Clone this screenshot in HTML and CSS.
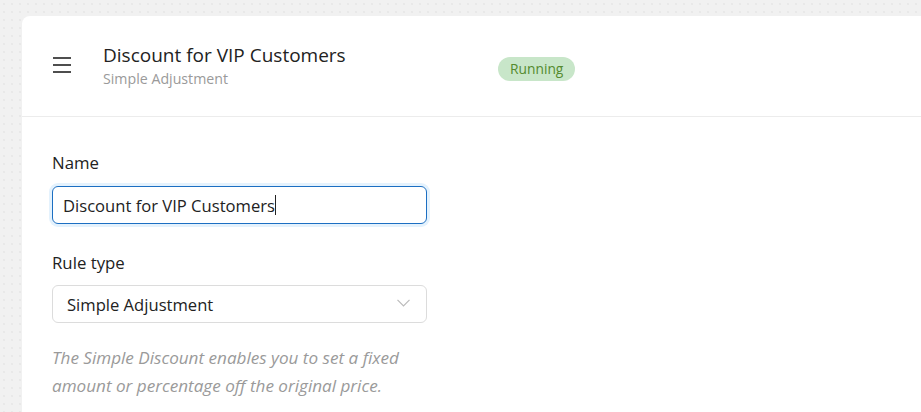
FILE: index.html
```html
<!DOCTYPE html>
<html lang="en">
<head>
<meta charset="utf-8">
<title>Discount for VIP Customers</title>
<link rel="stylesheet" href="styles.css">
</head>
<body>
<div class="page">
  <section class="card">
    <header class="card-header">
      <button class="menu-btn" aria-label="Menu">
        <svg width="18" height="16" viewBox="0 0 18 16" fill="none" stroke="#222" stroke-width="1.6">
          <line x1="0" y1="1" x2="18" y2="1"/>
          <line x1="0" y1="8" x2="18" y2="8"/>
          <line x1="0" y1="15" x2="18" y2="15"/>
        </svg>
      </button>
      <div class="title-block">
        <h1 class="title">Discount for VIP Customers</h1>
        <div class="subtitle">Simple Adjustment</div>
      </div>
      <span class="badge">Running</span>
    </header>
    <div class="card-body">
      <div class="field">
        <label class="label" for="name">Name</label>
        <div class="input focused" id="name">Discount for VIP Customers<span class="caret"></span></div>
      </div>
      <div class="field">
        <label class="label">Rule type</label>
        <div class="select">
          <span>Simple Adjustment</span>
          <svg class="chevron" width="13" height="8" viewBox="0 0 13 8" fill="none" stroke="#bbb" stroke-width="1.2">
            <polyline points="0.5,0.8 6.5,7 12.5,0.8"/>
          </svg>
        </div>
      </div>
      <p class="help">The Simple Discount enables you to set a fixed amount or percentage off the original price.</p>
    </div>
  </section>
</div>
</body>
</html>
```

FILE: styles.css
```css
html, body {
  margin: 0;
  padding: 0;
  height: 100%;
  overflow: hidden;
}
body {
  background-color: #f1f1f1;
  background-image: radial-gradient(circle, #e4e4e4 0.6px, transparent 0.9px);
  background-size: 8px 8px;
  font-family: "Open Sans", "Noto Sans", "Liberation Sans", sans-serif;
  color: #222;
}
.page {
  padding: 16px 0 0 22px;
}
.card {
  background: #fff;
  border-radius: 8px 0 0 0;
  height: 396px;
}
.card-header {
  display: flex;
  align-items: center;
  height: 100px;
  padding-left: 31px;
  border-bottom: 1px solid #ececec;
}
.menu-btn {
  display: flex;
  border: 0;
  padding: 0;
  background: none;
  margin-top: -2px;
}
.title-block {
  flex: 0 0 395px;
  margin-left: 32px;
  margin-top: -1px;
}
.title {
  margin: 0;
  font-size: 19px;
  font-weight: 400;
  line-height: 25px;
  color: #222;
}
.subtitle {
  font-size: 14.2px;
  line-height: 21px;
  color: #9a9a9a;
}
.badge {
  display: inline-block;
  background: #c8e6c9;
  color: #558b2f;
  font-size: 13.8px;
  line-height: 24px;
  padding: 0 12px;
  border-radius: 12px;
  margin-top: 6px;
}
.card-body {
  padding: 35px 30px 0 30px;
  width: 375px;
}
.field {
  margin-bottom: 28px;
}
.field + .field {
  margin-bottom: 21px;
}
.label {
  display: block;
  font-size: 16.8px;
  line-height: 22px;
  margin-bottom: 12px;
  color: #222;
}
.field + .field .label {
  margin-bottom: 11px;
}
.input, .select {
  box-sizing: border-box;
  height: 38px;
  border-radius: 6px;
  font-size: 16.6px;
  display: flex;
  align-items: center;
  color: #222;
}
.input {
  border: 1px solid #1c6fc2;
  padding-left: 10px;
  box-shadow: 0 0 0 3px #e4f2fd;
}
.caret {
  display: inline-block;
  width: 1px;
  height: 20px;
  background: #222;
  margin-left: 0;
}
.select {
  border: 1px solid #dcdcdc;
  padding: 0 16px 0 14px;
  justify-content: space-between;
}
.chevron {
  display: block;
  margin-top: -2px;
}
.help {
  margin: 0;
  font-size: 17.1px;
  line-height: 28px;
  font-style: italic;
  color: #9a9a9a;
}
```
